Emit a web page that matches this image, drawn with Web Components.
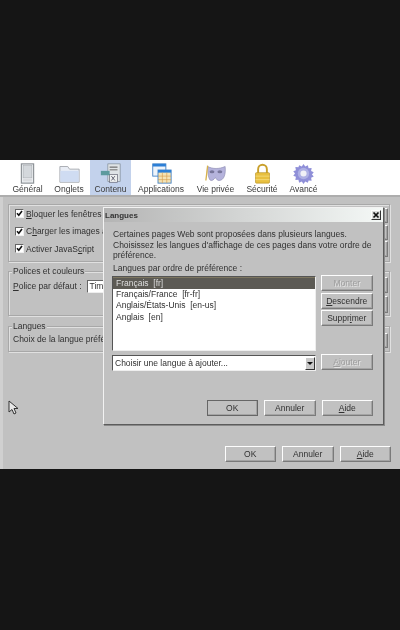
<!DOCTYPE html>
<html lang="fr"><head><meta charset="utf-8"><title>Langues</title>
<style>html,body{margin:0;padding:0;background:#151515;height:630px;overflow:hidden}
body{font:8.5px "Liberation Sans",Arial,sans-serif;color:#303030}</style></head>
<body>
<prefs-window>
<tool-bar slot="bar">
<tool-tab label="Général"><svg viewBox="0 0 24 24"><rect x="5" y="1" width="14" height="22" fill="#eceff2" stroke="#8a8f94" stroke-width="1.300"/><rect x="7" y="3" width="10" height="14" fill="#d4d8dc" stroke="#a5a9ad" stroke-width=".6"/><rect x="7" y="18" width="10" height="3" fill="#dadcdf"/></svg></tool-tab>
<tool-tab label="Onglets"><svg viewBox="0 0 24 24"><path d="M1 4h9l2 3h11v15H1z" fill="#e9edf5" stroke="#a2a6ab"/><path d="M1.500 9h21v12.500h-21z" fill="#cfdcf2"/></svg></tool-tab>
<tool-tab label="Contenu" active><svg viewBox="0 0 24 24"><rect x="9" y="1" width="14" height="20" fill="#dfe3e6" stroke="#75808a" stroke-width=".7"/><rect x="11" y="13" width="9" height="9" fill="#eef0f0" stroke="#556" stroke-width=".7"/><path d="M13 15l4 5M17 15l-4 5" stroke="#556" stroke-width="1"/><rect x="1" y="9" width="10" height="5" fill="#5d9a9e"/><rect x="11" y="4" width="9" height="1.500" fill="#777"/><rect x="11" y="7" width="9" height="1.500" fill="#888"/></svg></tool-tab>
<tool-tab label="Applications"><svg viewBox="0 0 24 24"><rect x="2" y="1" width="15" height="14" fill="#eef4fb" stroke="#3f7fc4"/><rect x="2" y="1" width="15" height="3" fill="#2c7fd6"/><rect x="8" y="8" width="15" height="15" fill="#f5e3b4" stroke="#3f7fc4"/><rect x="8" y="8" width="15" height="3" fill="#2c7fd6"/><path d="M8 15h15M8 19h15M13 11v12M18 11v12" stroke="#d69a4a" stroke-width=".7"/></svg></tool-tab>
<tool-tab label="Vie privée"><svg viewBox="0 0 24 24"><path d="M3 4c6 3 13 3 20 0 1 8-1 16-7 16-3 0-3-3-4-3s-2 3-5 3C4 20 3 11 3 4z" fill="#b5b3dc" stroke="#8c8ab0" stroke-width=".7"/><ellipse cx="8" cy="10" rx="2.800" ry="1.800" fill="#77759a"/><ellipse cx="17" cy="10" rx="2.800" ry="1.800" fill="#77759a"/><path d="M3 3L1 20" stroke="#d8b24a" stroke-width="1.500"/></svg></tool-tab>
<tool-tab label="Sécurité"><svg viewBox="0 0 24 24"><path d="M7 12V7a5 5 0 0 1 10 0v5" fill="none" stroke="#c9a02c" stroke-width="2.200"/><rect x="4" y="11" width="16" height="12" rx="1" fill="#e8c040" stroke="#b58f22" stroke-width=".7"/><path d="M4 15h16M4 19h16" stroke="#f3da7c" stroke-width="1"/></svg></tool-tab>
<tool-tab label="Avancé"><svg viewBox="0 0 24 24"><path d="M12 1l2 3 3-1.500 .8 3.400 3.500-.2-.6 3.500 3 1.300-2 2.500 2 2.500-3 1.300.6 3.500-3.500-.2L17 22.500 14 21l-2 3-2-3-3 1.500-.8-3.400-3.500.2.600-3.500-3-1.300 2-2.500-2-2.500 3-1.300-.6-3.500 3.500.2L7 2.500 10 4z" fill="#8f8fd8"/><circle cx="12" cy="12" r="6.500" fill="#aeb0e4"/><circle cx="12" cy="12" r="3.500" fill="#f0f0f6"/></svg></tool-tab>
</tool-bar>

<group-box gap="7" h="58" pad="0" stubs="3:15,2:15,1:16">
<check-row><u>B</u>loquer les fenêtres</check-row>
<check-row>C<u>h</u>arger les images a</check-row>
<check-row>Activer JavaS<u>c</u>ript</check-row>
</group-box>
<group-box legend="Polices et couleurs" gap="9" h="45" pad="7" stubs="-2:16,3:17">
<font-row></font-row>
</group-box>
<group-box legend="Langues" gap="10" h="26" pad="7" stubs="-1:15">
<span>Choix de la langue préfé</span>
</group-box>

<button-row>
<win-button>OK</win-button><win-button>Annuler</win-button><win-button><u>A</u>ide</win-button>
</button-row>

<svg slot="cursor" width="11" height="15" viewBox="0 0 11 15" style="position:absolute;left:8px;top:400px"><path d="M1 1v11l3-2.500 2 4.500 2-1-2-4.500h4z" fill="#e8e8e8" stroke="#333" stroke-width="1"/></svg>

<lang-dialog slot="dialog"></lang-dialog>
</prefs-window>

<script>
const sh=(el,html)=>{el.attachShadow({mode:'open'}).innerHTML=html;};
const F='font:8.5px "Liberation Sans",Arial,sans-serif;color:#303030;';
const BEVEL='border:1px solid;border-color:#fdfdfd #7a7a7a #7a7a7a #fdfdfd;box-shadow:-1px -1px 0 #a4a4a4 inset;';
class PrefsWindow extends HTMLElement{constructor(){super();sh(this,`<style>
:host{display:block;position:relative;height:630px;box-sizing:border-box;padding-top:160px;filter:blur(.4px)}
.win{height:309px;background:#c1c1c1;display:flex;flex-direction:column;${F}}
.body{flex:1;display:flex;flex-direction:column;padding:0 10px 0 5px;border-left:3px solid #d0d0d0}
</style><div class="win"><slot name="bar"></slot><div class="body"><slot></slot></div></div><slot name="cursor"></slot><slot name="dialog"></slot>`);}}
class ToolBar extends HTMLElement{constructor(){super();sh(this,`<style>
:host{display:flex;height:35px;background:#fff;padding-left:7px;border-bottom:2px solid #adadad;flex:none}
</style><slot></slot>`);}}
const TABW={"Général":41,"Onglets":42,"Contenu":41,"Applications":60,"Vie privée":49,"Sécurité":44,"Avancé":39};
class ToolTab extends HTMLElement{constructor(){super();const l=this.getAttribute('label');sh(this,`<style>
:host{display:flex;flex-direction:column;align-items:center;height:35px;box-sizing:border-box;${F}color:#3a3a3a;padding:3px 0 0;width:${TABW[l]}px;flex:none}
:host([active]){background:#c3d2ec}
::slotted(svg){width:21px;height:21px;flex:none}
span{white-space:nowrap;line-height:11px}
</style><slot></slot><span>${l}</span>`);}}
class GroupBox extends HTMLElement{constructor(){super();const a=n=>this.getAttribute(n);const l=a('legend');
const st=(a('stubs')||'').split(',').map(s=>{const [m,h]=s.split(':');return `<win-button style="width:60px;height:${h}px;margin-top:${m}px"></win-button>`;}).join('');
sh(this,`<style>
:host{display:flex;margin-top:${a('gap')}px;height:${a('h')}px;flex:none;box-sizing:border-box;border:1px solid #a8a8a8;box-shadow:1px 1px 0 #e0e0e0 inset,1px 1px 0 #e0e0e0;padding:${a('pad')}px 1px 0 4px;position:relative}
.main{flex:1;min-width:0}
.side{flex:none;display:flex;flex-direction:column}
.l{position:absolute;left:3px;top:-7px;background:#c1c1c1;padding:0 1px;line-height:12px}
</style>${l?`<span class="l">${l}</span>`:''}<div class="main"><slot></slot></div><div class="side">${st}</div>`);}}
class CheckRow extends HTMLElement{constructor(){super();sh(this,`<style>
:host{display:flex;align-items:center;gap:2px;height:18px;white-space:nowrap;padding-left:2px;margin-top:-.4px}
i{width:9px;height:9px;box-sizing:border-box;flex:none;background:#fff;border:1px solid;border-color:#666 #eee #eee #666;display:block}
svg{display:block;width:7px;height:7px}
</style><i><svg viewBox="0 0 7 7"><path d="M1 3.200l1.800 2L6 1" fill="none" stroke="#111" stroke-width="1.600"/></svg></i><span><slot></slot></span>`);}}
class FontRow extends HTMLElement{constructor(){super();sh(this,`<style>
:host{display:flex;align-items:center;gap:5px;white-space:nowrap;height:14px}
b{font-weight:400;background:#fff;border:1px solid;border-color:#666 #eee #eee #666;height:13px;box-sizing:border-box;line-height:11px;width:60px;padding-left:2px}
</style><span><u>P</u>olice par défaut :</span><b>Tim</b>`);}}
class ButtonRow extends HTMLElement{constructor(){super();sh(this,`<style>
:host{display:flex;justify-content:flex-end;gap:6px;margin:auto -1px 0 0;padding-bottom:7px}
</style><slot></slot>`);}}
class WinButton extends HTMLElement{constructor(){super();sh(this,`<style>
:host{display:inline-flex;align-items:center;justify-content:center;width:51.5px;height:16px;box-sizing:border-box;${BEVEL}background:#c1c1c1;${F}white-space:nowrap;flex:none}
:host([disabled]){color:#9d9d9d;text-shadow:1px 1px 0 #e4e4e4}
:host([default]){outline:1px solid #666;outline-offset:-1px}
</style><slot></slot>`);}}
class LangItem extends HTMLElement{constructor(){super();sh(this,`<style>
:host{display:block;height:11.7px;line-height:11.7px;padding-left:3px;color:#303030;white-space:pre}
:host([selected]){background:#5c5a54;color:#dedede;border-top:1px solid #7d7660;box-sizing:border-box;line-height:10.700px}
</style><slot></slot>`);}}
class LangDialog extends HTMLElement{constructor(){super();sh(this,`<style>
:host{position:absolute;left:103px;top:207px;width:281px;height:218px;box-sizing:border-box;background:#c1c1c1;border:1px solid;border-color:#f2f2f2 #5c5c5c #5c5c5c #f2f2f2;box-shadow:1px 1px 0 #8a8a8a;display:flex;flex-direction:column;${F}}
.title{flex:none;height:14px;display:flex;align-items:center;justify-content:space-between;padding:0 2px 0 1px;background:linear-gradient(90deg,#b4b4b4,#f4f8f6);font-weight:700;font-size:8px;color:#333}
.x{width:10px;height:10px;background:#ddd;border:1px solid;border-color:#fff #333 #333 #fff;display:flex;box-sizing:border-box}
.x svg{width:8px;height:8px}
.c{flex:1;display:flex;flex-direction:column;padding:7px 10px 8px 8px}
p{margin:0 0 0 1px;line-height:10.500px;white-space:nowrap}
.lab{margin:2.500px 0 0 1px;line-height:11px}
.g{display:grid;grid-template-columns:204px 51.5px;column-gap:5px;margin-top:1px}
.list{height:75px;margin-top:1px;background:#fff;border:1px solid;border-color:#555 #eee #eee #555;box-sizing:border-box}
.side{display:flex;flex-direction:column;gap:1.500px}
.combo{height:16px;margin-top:1px;background:#fff;border:1px solid;border-color:#555 #eee #eee #555;box-sizing:border-box;display:flex;align-items:center;justify-content:space-between;padding-left:2px}
.arr{width:10px;height:13px;background:#c9c9c9;border:1px solid;border-color:#fff #333 #333 #fff;box-sizing:border-box;display:flex;align-items:center;justify-content:center}
.arr:after{content:"";border:3px solid transparent;border-top:3px solid #111;border-bottom:0}
.g2{margin-top:3px}
.foot{display:flex;justify-content:flex-end;gap:6px;margin-top:auto}
</style>
<div class="title"><span>Langues</span><span class="x"><svg viewBox="0 0 8 8"><path d="M1.500 1.500l5 5M6.500 1.500l-5 5" stroke="#111" stroke-width="1.700"/></svg></span></div>
<div class="c">
<p>Certaines pages Web sont proposées dans plusieurs langues.<br>Choisissez les langues d'affichage de ces pages dans votre ordre de<br>préférence.</p>
<div class="lab">Langues par ordre de préférence :</div>
<div class="g"><div class="list"><lang-item selected>Français  [fr]</lang-item><lang-item>Français/France  [fr-fr]</lang-item><lang-item>Anglais/États-Unis  [en-us]</lang-item><lang-item>Anglais  [en]</lang-item></div>
<div class="side"><win-button disabled>Monter</win-button><win-button><u>D</u>escendre</win-button><win-button>Suppr<u>i</u>mer</win-button></div></div>
<div class="g g2"><div class="combo"><span>Choisir une langue à ajouter...</span><span class="arr"></span></div><win-button disabled><u>A</u>jouter</win-button></div>
<div class="foot"><win-button default>OK</win-button><win-button>Annuler</win-button><win-button><u>A</u>ide</win-button></div>
</div>`);}}
for(const [n,c] of Object.entries({'prefs-window':PrefsWindow,'tool-bar':ToolBar,'tool-tab':ToolTab,'group-box':GroupBox,'check-row':CheckRow,'font-row':FontRow,'button-row':ButtonRow,'win-button':WinButton,'lang-item':LangItem,'lang-dialog':LangDialog}))customElements.define(n,c);
</script>
</body></html>
